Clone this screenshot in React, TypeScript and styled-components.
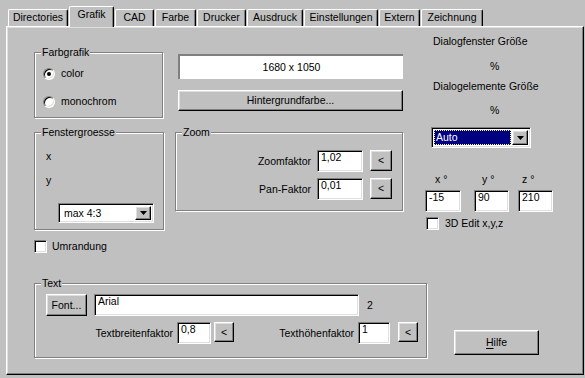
import React from 'react';
import styled, { createGlobalStyle, css } from 'styled-components';

const GlobalStyle = createGlobalStyle`
  *, *::before, *::after { box-sizing: border-box; }
  html, body { margin: 0; padding: 0; background: #c0c0c0; }
  body {
    font-family: "Liberation Sans", Arial, sans-serif;
    font-size: 10.5px;
    line-height: 13px;
    color: #000;
  }
`;

const raised = css`
  background: #c0c0c0;
  border: 1px solid;
  border-color: #fff #000 #000 #fff;
  box-shadow: inset -1px -1px 0 #808080, inset 1px 1px 0 #dfdfdf;
`;

const sunken = css`
  background: #fff;
  border: 1px solid;
  border-color: #808080 #fff #fff #808080;
  box-shadow: inset 1px 1px 0 #000, inset -1px -1px 0 #dfdfdf;
`;

const Dialog = styled.div`
  width: 585px;
  height: 378px;
  padding: 6px 0 0 6px;
  background: #c0c0c0;
`;

const TabStrip = styled.div`
  display: flex;
  align-items: flex-end;
  gap: 1px;
  height: 20px;
  padding-left: 2px;
`;

const Tab = styled.div<{ $w: number; $active?: boolean }>`
  position: relative;
  z-index: ${(p) => (p.$active ? 1 : 0)};
  width: ${(p) => p.$w}px;
  height: ${(p) => (p.$active ? 21 : 17)}px;
  margin-bottom: ${(p) => (p.$active ? -1 : 0)}px;
  padding-top: 1px;
  background: #c0c0c0;
  border: 1px solid #fff;
  border-right-color: #000;
  border-bottom: none;
  border-radius: 2px 2px 0 0;
  box-shadow: inset -1px 0 0 #808080;
  text-align: center;
  white-space: nowrap;
`;

const Panel = styled.div`
  display: flex;
  flex-direction: column;
  width: 578px;
  height: 349px;
  padding-left: 27px;
  border: 1px solid;
  border-color: #fff #000 #000 #fff;
  box-shadow: inset -1px -1px 0 #808080, inset 1px 1px 0 #dfdfdf;
`;

const TopRow = styled.div`
  display: flex;
  align-items: flex-start;
`;

const Column = styled.div<{ $w: number; $ml?: number }>`
  display: flex;
  flex-direction: column;
  align-items: flex-start;
  width: ${(p) => p.$w}px;
  margin-left: ${(p) => p.$ml ?? 0}px;
`;

const Group = styled.div<{ $w: number; $h: number; $mt?: number }>`
  width: ${(p) => p.$w}px;
  height: ${(p) => p.$h}px;
  margin-top: ${(p) => p.$mt ?? 0}px;
  border: 1px solid #808080;
  box-shadow: 1px 1px 0 #fff, inset 1px 1px 0 #fff;
`;

const Legend = styled.div`
  width: fit-content;
  height: 13px;
  margin: -7px 0 -6px 6px;
  padding: 0 1px;
  background: #c0c0c0;
  white-space: nowrap;
`;

const GroupBody = styled.div<{ $pad: string; $align?: string }>`
  display: flex;
  flex-direction: column;
  align-items: ${(p) => p.$align ?? 'flex-start'};
  padding: ${(p) => p.$pad};
`;

const OptionRow = styled.div<{ $mt?: number; $ml?: number; $gap?: number }>`
  display: flex;
  align-items: center;
  gap: ${(p) => p.$gap ?? 6}px;
  margin-top: ${(p) => p.$mt ?? 0}px;
  margin-left: ${(p) => p.$ml ?? 0}px;
  white-space: nowrap;
`;

const Radio = styled.span<{ $on?: boolean }>`
  display: flex;
  align-items: center;
  justify-content: center;
  width: 12px;
  height: 12px;
  border-radius: 50%;
  ${sunken};
  &::after {
    content: '';
    display: ${(p) => (p.$on ? 'block' : 'none')};
    width: 4px;
    height: 4px;
    border-radius: 50%;
    background: #000;
  }
`;

const Check = styled.span`
  width: 13px;
  height: 13px;
  ${sunken};
`;

const Field = styled.div<{ $w: number; $h?: number; $ml?: number }>`
  flex: none;
  width: ${(p) => p.$w}px;
  height: ${(p) => p.$h ?? 22}px;
  margin-left: ${(p) => p.$ml ?? 0}px;
  padding: 1px 3px 0;
  line-height: 11px;
  white-space: nowrap;
  overflow: hidden;
  ${sunken};
`;

const Display = styled.div`
  display: flex;
  align-items: center;
  justify-content: center;
  width: 225px;
  height: 25px;
  margin: 27px 0 0 3px;
  background: #fff;
  border-top: 2px solid #808080;
  border-left: 2px solid #808080;
`;

const PushButton = styled.button<{ $w: number; $h: number; $mt?: number; $ml?: number }>`
  flex: none;
  display: flex;
  align-items: center;
  justify-content: center;
  width: ${(p) => p.$w}px;
  height: ${(p) => p.$h}px;
  margin: ${(p) => p.$mt ?? 0}px 0 0 ${(p) => p.$ml ?? 0}px;
  padding: 0;
  font: inherit;
  color: #000;
  ${raised};
  u { text-decoration-thickness: 1px; text-underline-offset: 2px; }
`;

const Combo = styled.div<{ $w: number; $h: number; $mt?: number; $ml?: number }>`
  display: flex;
  width: ${(p) => p.$w}px;
  height: ${(p) => p.$h}px;
  margin: ${(p) => p.$mt ?? 0}px 0 0 ${(p) => p.$ml ?? 0}px;
  padding: 2px;
  ${sunken};
`;

const ComboValue = styled.div<{ $selected?: boolean }>`
  flex: 1;
  display: flex;
  align-items: center;
  padding-left: ${(p) => (p.$selected ? 1 : 3)}px;
  margin-right: 1px;
  white-space: nowrap;
  ${(p) =>
    p.$selected &&
    css`
      background: #000080;
      color: #fff;
      border: 1px dotted #ffff7f;
    `}
`;

const ComboArrow = styled.div`
  display: flex;
  align-items: center;
  justify-content: center;
  width: 16px;
  ${raised};
`;

const Arrow = () => (
  <svg width="7" height="4" viewBox="0 0 7 4">
    <path d="M0 0h7L3.5 4z" fill="#000" />
  </svg>
);

const Line = styled.div<{ $mt?: number; $pl?: number }>`
  margin-top: ${(p) => p.$mt ?? 0}px;
  padding-left: ${(p) => p.$pl ?? 0}px;
  white-space: nowrap;
`;

const FieldRow = styled.div<{ $mt?: number }>`
  display: flex;
  align-items: center;
  margin-top: ${(p) => p.$mt ?? 0}px;
  white-space: nowrap;
  & > button { align-self: flex-start; }
`;

const RightLabel = styled.div<{ $w: number }>`
  flex: none;
  width: ${(p) => p.$w}px;
  text-align: right;
  white-space: nowrap;
`;

const AxisRow = styled.div`
  display: flex;
  margin-top: 25px;
`;

const AxisCell = styled.div<{ $ml: number; $w: number; $pl: number }>`
  display: flex;
  flex-direction: column;
  width: ${(p) => p.$w}px;
  margin-left: ${(p) => p.$ml}px;
  span { padding-left: ${(p) => p.$pl}px; margin-bottom: 4px; white-space: nowrap; }
`;

const BottomRow = styled.div`
  display: flex;
  align-items: flex-start;
  margin-top: 30px;
`;

const tabs = [
  { label: 'Directories', w: 60 },
  { label: 'Grafik', w: 45, active: true },
  { label: 'CAD', w: 39 },
  { label: 'Farbe', w: 41 },
  { label: 'Drucker', w: 49 },
  { label: 'Ausdruck', w: 56 },
  { label: 'Einstellungen', w: 74 },
  { label: 'Extern', w: 41 },
  { label: 'Zeichnung', w: 62 },
];

const axes = [
  { name: 'x', value: '-15', ml: 0, w: 36, pl: 10 },
  { name: 'y', value: '90', ml: 13, w: 35, pl: 8 },
  { name: 'z', value: '210', ml: 9, w: 35, pl: 4 },
];

export default function App() {
  return (
    <>
      <GlobalStyle />
      <Dialog>
        <TabStrip>
          {tabs.map((t) => (
            <Tab key={t.label} $w={t.w} $active={t.active}>
              {t.label}
            </Tab>
          ))}
        </TabStrip>
        <Panel>
          <TopRow>
            <Column $w={130}>
              <Group $w={129} $h={66} $mt={25}>
                <Legend>Farbgrafik</Legend>
                <GroupBody $pad="14px 0 0 8px">
                  <OptionRow>
                    <Radio $on />
                    <span>color</span>
                  </OptionRow>
                  <OptionRow $mt={15}>
                    <Radio />
                    <span>monochrom</span>
                  </OptionRow>
                </GroupBody>
              </Group>
              <Group $w={130} $h={98} $mt={14}>
                <Legend>Fenstergroesse</Legend>
                <GroupBody $pad="17px 0 0 11px">
                  <Line>x</Line>
                  <Line $mt={11}>y</Line>
                  <Combo $w={96} $h={20} $mt={16} $ml={12}>
                    <ComboValue>max 4:3</ComboValue>
                    <ComboArrow>
                      <Arrow />
                    </ComboArrow>
                  </Combo>
                </GroupBody>
              </Group>
              <OptionRow $mt={10} $gap={5}>
                <Check />
                <span>Umrandung</span>
              </OptionRow>
            </Column>

            <Column $w={228} $ml={11}>
              <Display>1680 x 1050</Display>
              <PushButton $w={225} $h={21} $mt={11} $ml={3}>
                Hintergrundfarbe...
              </PushButton>
              <Group $w={228} $h={79} $mt={21}>
                <Legend>Zoom</Legend>
                <GroupBody $pad="17px 10px 0 0" $align="flex-end">
                  <FieldRow>
                    <span>Zoomfaktor</span>
                    <Field $w={46} $ml={6}>1,02</Field>
                    <PushButton $w={22} $h={21} $ml={7}>&lt;</PushButton>
                  </FieldRow>
                  <FieldRow $mt={6}>
                    <span>Pan-Faktor</span>
                    <Field $w={46} $ml={6}>0,01</Field>
                    <PushButton $w={22} $h={21} $ml={7}>&lt;</PushButton>
                  </FieldRow>
                </GroupBody>
              </Group>
            </Column>

            <Column $w={134} $ml={22}>
              <Line $mt={8} $pl={8}>Dialogfenster Größe</Line>
              <Line $mt={12} $pl={65}>%</Line>
              <Line $mt={7} $pl={8}>Dialogelemente Größe</Line>
              <Line $mt={11} $pl={65}>%</Line>
              <Combo $w={100} $h={21} $mt={10} $ml={6}>
                <ComboValue $selected>Auto</ComboValue>
                <ComboArrow>
                  <Arrow />
                </ComboArrow>
              </Combo>
              <AxisRow>
                {axes.map((a) => (
                  <AxisCell key={a.name} $ml={a.ml} $w={a.w} $pl={a.pl}>
                    <span>{a.name} °</span>
                    <Field $w={a.w}>{a.value}</Field>
                  </AxisCell>
                ))}
              </AxisRow>
              <OptionRow $mt={5} $ml={1}>
                <Check />
                <span>3D Edit x,y,z</span>
              </OptionRow>
            </Column>
          </TopRow>

          <BottomRow>
            <Group $w={393} $h={75}>
              <Legend>Text</Legend>
              <GroupBody $pad="10px 0 0 11px">
                <FieldRow>
                  <PushButton $w={41} $h={22}>Font...</PushButton>
                  <Field $w={265} $ml={7}>Arial</Field>
                  <Line $pl={8}>2</Line>
                </FieldRow>
                <FieldRow $mt={6}>
                  <RightLabel $w={127}>Textbreitenfaktor</RightLabel>
                  <Field $w={34} $ml={4}>0,8</Field>
                  <PushButton $w={20} $h={20} $ml={3}>&lt;</PushButton>
                  <RightLabel $w={120}>Texthöhenfaktor</RightLabel>
                  <Field $w={32} $ml={4}>1</Field>
                  <PushButton $w={20} $h={20} $ml={8}>&lt;</PushButton>
                </FieldRow>
              </GroupBody>
            </Group>
            <PushButton $w={85} $h={25} $ml={27} $mt={47}>
              <span>
                <u>H</u>ilfe
              </span>
            </PushButton>
          </BottomRow>
        </Panel>
      </Dialog>
    </>
  );
}
